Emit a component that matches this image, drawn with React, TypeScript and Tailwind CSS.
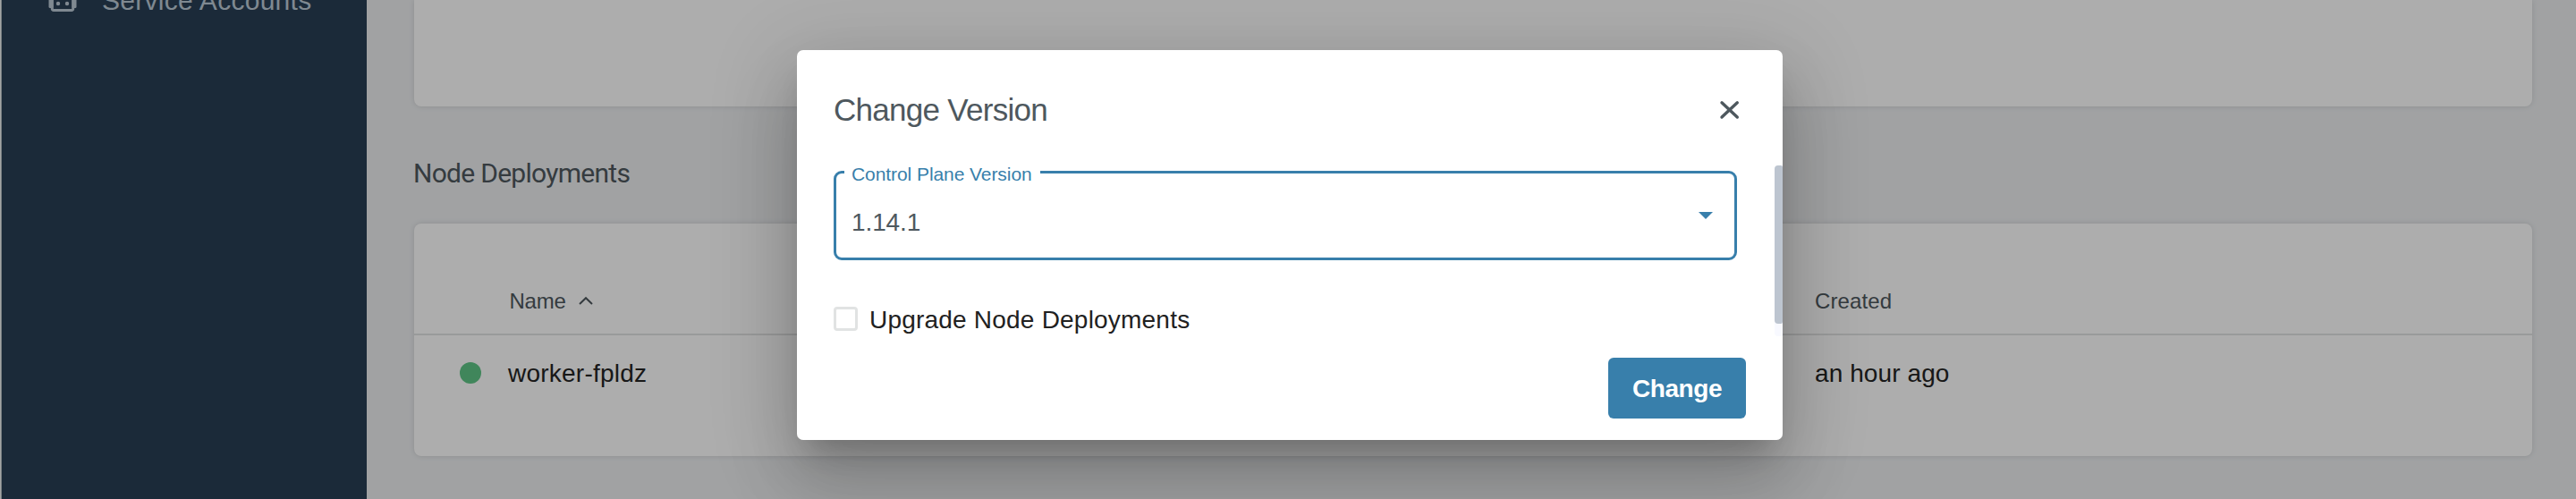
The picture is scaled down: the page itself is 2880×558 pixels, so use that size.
function RobotIcon() {
  return (
    <svg width="32" height="32" viewBox="0 0 32 32" fill="none" className="shrink-0">
      <path d="M4.300 9v19a1.500 1.500 0 0 0 1.500 1.500h20.400a1.500 1.500 0 0 0 1.500-1.500V9a1.500 1.500 0 0 0-1.500-1.500H5.800a1.500 1.500 0 0 0-1.500 1.500Z" stroke="#bccad6" strokeWidth="3" />
      <path d="M16 7V2" stroke="#bccad6" strokeWidth="3" />
      <rect x="0.500" y="14" width="5" height="13" rx="1.500" fill="#bccad6" />
      <rect x="26.500" y="14" width="5" height="13" rx="1.500" fill="#bccad6" />
      <circle cx="11" cy="22" r="2.200" fill="#bccad6" />
      <circle cx="21" cy="22" r="2.200" fill="#bccad6" />
    </svg>
  )
}

function Sidebar() {
  return (
    <aside className="flex w-[410px] shrink-0 bg-[#293f55]">
      <div className="w-px bg-[#f2f4f2]" />
      <div className="w-px bg-[#b4bdc2]" />
      <div className="-mt-[18px] flex h-[35px] items-start gap-[28px] pl-[52px]">
        <RobotIcon />
        <span className="pt-[2px] text-[30px] leading-[33px] tracking-[0.270px] whitespace-nowrap text-[#bccad6]">
          Service Accounts
        </span>
      </div>
    </aside>
  )
}

function NodeDeployments() {
  return (
    <section className="h-[260px] w-[2368px] rounded-lg bg-white shadow-[0_0_6px_rgba(0,0,0,0.12)]">
      <div className="flex h-[125px] border-b-2 border-[#e2e3e3] pt-[73px] text-[24px] leading-[27px] text-[#4e585e]">
        <div className="flex w-[1566px] pl-[106.500px]">
          <span className="w-[77.500px] tracking-[-0.224px]">Name</span>
          <svg width="16" height="10" viewBox="0 0 16 10" fill="none" className="mt-[8px]">
            <path d="M1 9 8 2.200l7 6.800" stroke="#4e585e" strokeWidth="2" />
          </svg>
        </div>
        <span className="tracking-[0.100px]">Created</span>
      </div>
      <div className="flex pt-[27px] text-[28px] leading-[31px] text-[#242424]">
        <div className="flex w-[1566px] pl-[50.500px]">
          <span className="mt-[3px] mr-[30.500px] size-6 rounded-full bg-[#5fc687]" />
          <span className="tracking-[0.229px]">worker-fpldz</span>
        </div>
        <span className="tracking-[0.090px]">an hour ago</span>
      </div>
    </section>
  )
}

function ChangeVersionDialog() {
  return (
    <div
      role="dialog"
      className="flex h-[436px] w-[1102px] flex-col overflow-hidden rounded-[7px] bg-white"
    >
      <header className="flex h-[129px] shrink-0 items-start justify-between pt-[47px] pr-[45px] pl-[41px]">
        <h2 className="text-[35px] leading-[39px] tracking-[-0.720px] text-[#4e585e]">Change Version</h2>
        <svg width="28" height="28" viewBox="0 0 28 28" fill="none" className="mt-[7px]">
          <path d="M5 4.800 22.300 21M22.300 4.800 5 21" stroke="#4e585e" strokeWidth="3.400" strokeLinecap="round" />
        </svg>
      </header>
      <div className="flex h-[191px] shrink-0">
        <div className="flex-1 pt-[6px] pr-[42px] pl-[41px]">
          <div className="relative flex h-[100px] items-start justify-between rounded-[9px] border-[3px] border-[#387fab] pr-[24px] pl-[17px]">
            <label className="absolute -top-[11px] left-[9px] w-[219px] bg-white pl-[8px] text-[21px] leading-[23px] tracking-[-0.072px] whitespace-nowrap text-[#387fab]">
              Control Plane Version
            </label>
            <span className="pt-[39px] text-[28px] leading-[31px] tracking-[-0.100px] text-[#4e585e]">1.14.1</span>
            <svg width="16" height="8" viewBox="0 0 16 8" className="mt-[43px]">
              <path d="M0 0h16L8 8Z" fill="#387fab" />
            </svg>
          </div>
          <div className="mt-[51px] flex items-start gap-[13px]">
            <span className="mt-px size-[27px] rounded-[4px] border-[3px] border-[#e1e3e3]" />
            <span className="text-[28px] leading-[31px] tracking-[0.210px] text-[#212121]">Upgrade Node Deployments</span>
          </div>
        </div>
        <div className="w-[9px] rounded-l-[4px] bg-[#f8f9ff]">
          <div className="h-[177px] rounded-[4px] rounded-r-[2px] bg-[#bdc5d0]" />
        </div>
      </div>
      <footer className="flex justify-end pt-[24px] pr-[41px]">
        <button className="h-[68px] w-[154px] rounded-[6px] bg-[#387fab] text-[28px] leading-[31px] font-bold tracking-[-0.421px] text-white">
          Change
        </button>
      </footer>
    </div>
  )
}

export default function App() {
  return (
    <div className="relative flex h-[558px] w-[2880px] overflow-hidden bg-[#edeff1] font-['Liberation_Sans',Arial,sans-serif]">
      <Sidebar />
      <main className="flex-1 pl-[53px]">
        <div className="h-[119px] w-[2368px] rounded-b-lg bg-white shadow-[0_0_6px_rgba(0,0,0,0.12)]" />
        <h1 className="-ml-px h-[131px] pt-[57px] font-[Roboto,sans-serif] text-[30px] leading-[35px] tracking-[-0.720px] text-[#4e585e]">
          Node Deployments
        </h1>
        <NodeDeployments />
      </main>
      <div className="absolute inset-0 flex items-start bg-black/32 pt-[56px] pl-[891px]">
        <div className="rounded-[7px] shadow-[0_22px_30px_-14px_rgba(0,0,0,0.2),0_48px_76px_6px_rgba(0,0,0,0.14),0_18px_92px_16px_rgba(0,0,0,0.12)]">
          <ChangeVersionDialog />
        </div>
      </div>
    </div>
  )
}
